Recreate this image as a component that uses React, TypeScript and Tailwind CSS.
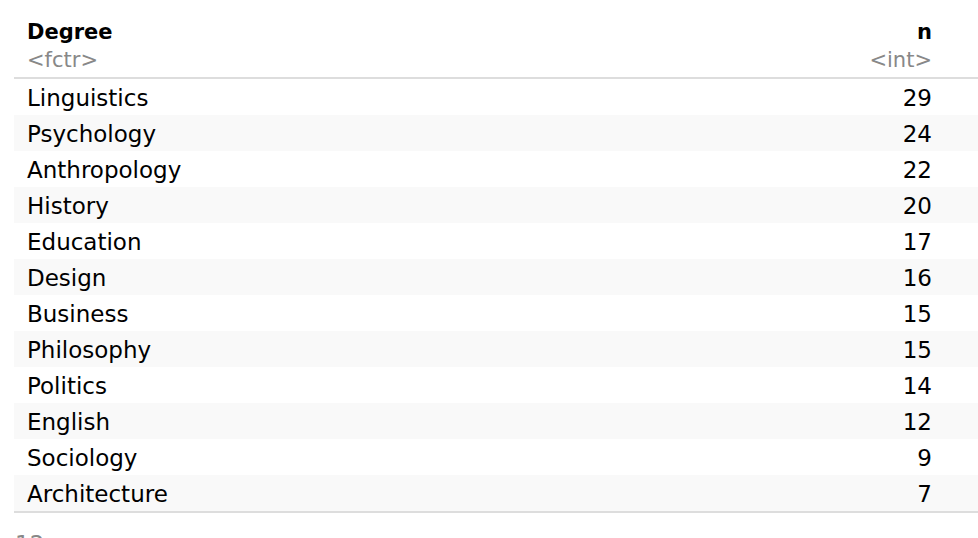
import React from "react";

const rows: [string, number][] = [
  ["Linguistics", 29],
  ["Psychology", 24],
  ["Anthropology", 22],
  ["History", 20],
  ["Education", 17],
  ["Design", 16],
  ["Business", 15],
  ["Philosophy", 15],
  ["Politics", 14],
  ["English", 12],
  ["Sociology", 9],
  ["Architecture", 7],
];

export default function App() {
  return (
    <div
      className="w-[978px] h-[538px] overflow-hidden bg-white pl-[14px]"
      style={{ fontFamily: '"DejaVu Sans", Verdana, sans-serif' }}
    >
      <div className="w-[964px]">
        <div className="flex justify-between pt-[20px] pb-[4px] pl-[13px] pr-[46px] border-b-2 border-[#dddddd]">
          <div className="flex flex-col items-start">
            <div className="text-[21px] leading-[24px] font-bold text-black">Degree</div>
            <div className="text-[21px] leading-[26px] pt-[3px] text-[#888888]">&lt;fctr&gt;</div>
          </div>
          <div className="flex flex-col items-end">
            <div className="text-[21px] leading-[24px] font-bold text-black">n</div>
            <div className="text-[21px] leading-[26px] pt-[3px] text-[#888888]">&lt;int&gt;</div>
          </div>
        </div>
        <div className="border-b-2 border-[#dddddd]">
          {rows.map(([name, n], i) => (
            <div
              key={name}
              className={
                "flex justify-between h-[36px] items-center pl-[13px] pr-[46px] text-[23px] leading-[36px] text-black " +
                (i % 2 === 1 ? "bg-[#f9f9f9]" : "bg-white")
              }
            >
              <span className="pt-[2px]">{name}</span>
              <span className="pt-[2px]">{n}</span>
            </div>
          ))}
        </div>
        <div className="pt-[13px] pl-[1px] text-[23px] leading-[36px] text-[#888888]">12 rows</div>
      </div>
    </div>
  );
}
